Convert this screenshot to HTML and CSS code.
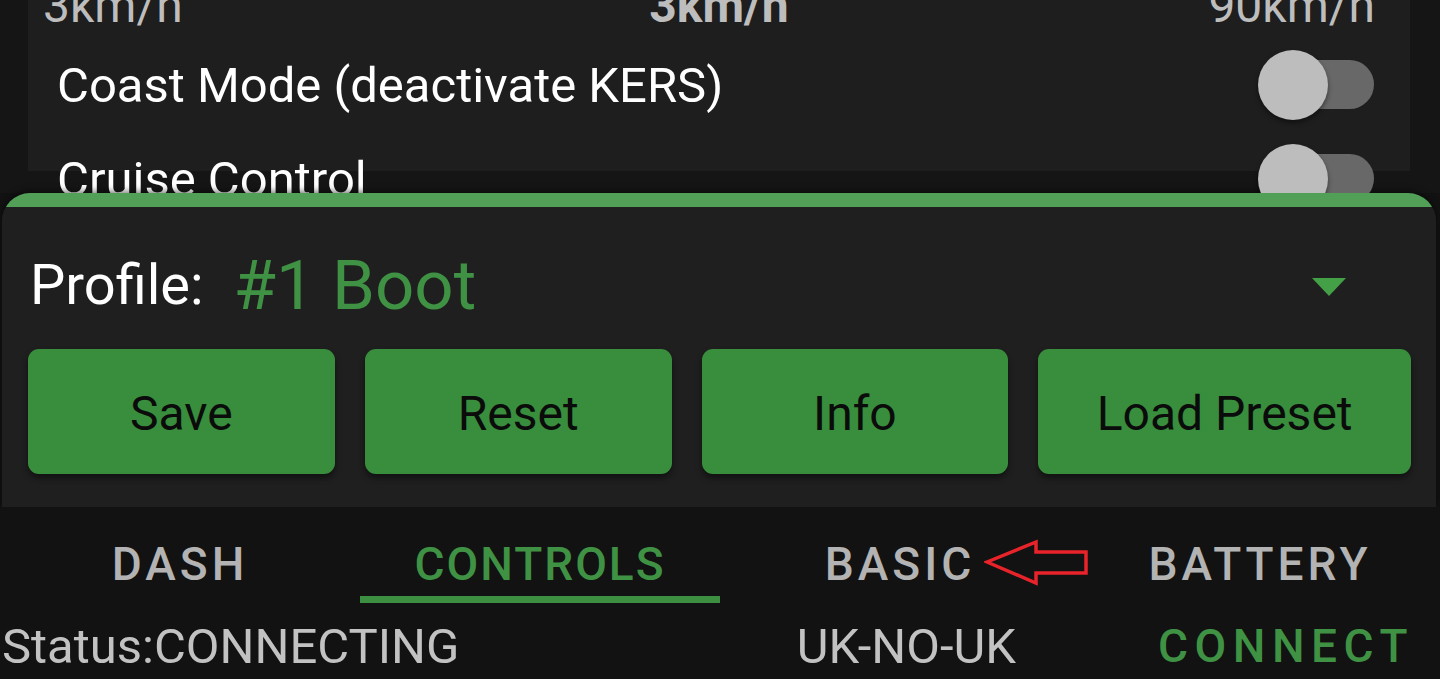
FILE: index.html
```html
<!DOCTYPE html>
<html lang="en">
<head>
<meta charset="utf-8">
<title>Controls</title>
<link rel="stylesheet" href="styles.css">
</head>
<body>
<div class="screen">
  <div class="content">
    <div class="card">
      <div class="speed-row">
        <span class="speed speed-min">3km/h</span>
        <span class="speed speed-cur">3km/h</span>
        <span class="speed speed-max">90km/h</span>
      </div>
      <div class="setting-row">
        <span class="setting-label">Coast Mode (deactivate KERS)</span>
        <span class="switch"><span class="switch-track"></span><span class="switch-thumb"></span></span>
      </div>
      <div class="setting-row">
        <span class="setting-label">Cruise Control</span>
        <span class="switch"><span class="switch-track"></span><span class="switch-thumb"></span></span>
      </div>
    </div>
  </div>

  <div class="sheet">
    <div class="profile-row">
      <span class="profile-label">Profile:</span>
      <span class="profile-value">#1 Boot</span>
      <svg class="dropdown" width="34" height="18" viewBox="0 0 34 18"><polygon points="0,0 34,0 17,18" fill="#43a047"/></svg>
    </div>
    <div class="buttons">
      <div class="btn">Save</div>
      <div class="btn">Reset</div>
      <div class="btn">Info</div>
      <div class="btn">Load Preset</div>
    </div>
  </div>

  <div class="tabs">
    <div class="tab">DASH</div>
    <div class="tab tab-active">CONTROLS</div>
    <div class="tab">BASIC</div>
    <div class="tab">BATTERY</div>
    <svg class="annot-arrow" width="106" height="48" viewBox="0 0 106 48">
      <polygon points="3,23 52,3 52,13 102,13 102,34 52,34 52,44" fill="none" stroke="#e8232a" stroke-width="3.5" stroke-linejoin="miter"/>
    </svg>
  </div>

  <div class="status-row">
    <span class="status-text">Status:CONNECTING</span>
    <span class="device">UK-NO-UK</span>
    <span class="connect">CONNECT</span>
  </div>
</div>
</body>
</html>
```

FILE: styles.css
```css
html, body {
  margin: 0;
  padding: 0;
}
body {
  background: #121212;
  font-family: Roboto, "Noto Sans", "Liberation Sans", sans-serif;
  width: 1440px;
  height: 679px;
  overflow: hidden;
}
.screen {
  display: flex;
  flex-direction: column;
  height: 679px;
}
.content {
  height: 193px;
  overflow: hidden;
  background: #151515;
  padding: 0 30px 0 28px;
  flex: none;
}
.card {
  background: #1e1e1e;
  height: 100%;
}
.speed-row {
  display: grid;
  grid-template-columns: 1fr auto 1fr;
  align-items: baseline;
  padding: 0 25px;
  margin-top: -22px;
  height: 56px;
  line-height: 56px;
  font-size: 48px;
  color: #bdbdbd;
  margin-bottom: 4px;
}
.speed-min { justify-self: start; margin-left: -10px; }
.speed-cur { justify-self: center; font-weight: 700; }
.speed-max { justify-self: end; margin-right: 10px; }
.setting-row {
  display: flex;
  align-items: center;
  justify-content: space-between;
  height: 94px;
  padding: 0 36px 0 29px;
}
.setting-label {
  font-size: 49px;
  color: #ffffff;
}
.switch {
  position: relative;
  width: 116px;
  height: 70px;
  display: block;
}
.switch-track {
  position: absolute;
  left: 30px;
  right: 0;
  top: 10px;
  height: 49px;
  border-radius: 25px;
  background: #686868;
}
.switch-thumb {
  position: absolute;
  left: 0;
  top: 0;
  width: 70px;
  height: 70px;
  border-radius: 50%;
  background: #bdbdbd;
  box-shadow: 0 3px 5px rgba(0,0,0,0.45);
}

.sheet {
  flex: none;
  margin: 0 4px 0 2px;
  height: 314px;
  box-sizing: border-box;
  border-radius: 28px 28px 0 0;
  background: linear-gradient(#52a058 0, #52a058 14px, #1f1f1f 14px);
  padding: 42px 25px 33px 26px;
  box-shadow: 0 -2px 6px rgba(0,0,0,0.5);
}
.profile-row {
  display: flex;
  align-items: center;
  height: 100px;
  margin-bottom: 14px;
  padding-left: 2px;
}
.profile-label {
  font-size: 56px;
  color: #ffffff;
}
.profile-value {
  font-size: 69px;
  color: #3f9143;
  margin-left: 30px;
}
.dropdown {
  margin-left: auto;
  margin-right: 65px;
  margin-top: 4px;
}
.buttons {
  display: grid;
  grid-template-columns: 307fr 307fr 307fr 373fr;
  column-gap: 30px;
  height: 125px;
}
.btn {
  background: #388e3c;
  border-radius: 11px;
  display: flex;
  align-items: center;
  justify-content: center;
  font-size: 48px;
  color: #0b0b0b;
  padding-top: 3px;
  box-sizing: border-box;
  box-shadow: 0 4px 6px rgba(0,0,0,0.45);
}

.tabs {
  position: relative;
  flex: none;
  display: grid;
  grid-template-columns: repeat(4, 360px);
  height: 98px;
  background: #121212;
}
.tab {
  display: flex;
  align-items: center;
  justify-content: center;
  font-size: 46px;
  font-weight: 500;
  letter-spacing: 4px;
  color: #b3b3b3;
  padding-top: 24px;
  box-sizing: border-box;
  border-bottom: 7px solid transparent;
  margin-bottom: 2px;
}
.tab-active {
  color: #3f9143;
  letter-spacing: 2px;
  border-bottom-color: #3c8f40;
}
.annot-arrow {
  position: absolute;
  left: 984px;
  top: 32px;
}

.status-row {
  flex: 1;
  display: flex;
  align-items: center;
  padding: 8px 26px 0 2px;
  font-size: 49px;
  color: #c2c2c2;
}
.device {
  margin-left: auto;
  margin-right: 2px;
}
.connect {
  margin-left: 140px;
  font-size: 46px;
  font-weight: 500;
  letter-spacing: 6.5px;
  color: #3f9143;
}
```
